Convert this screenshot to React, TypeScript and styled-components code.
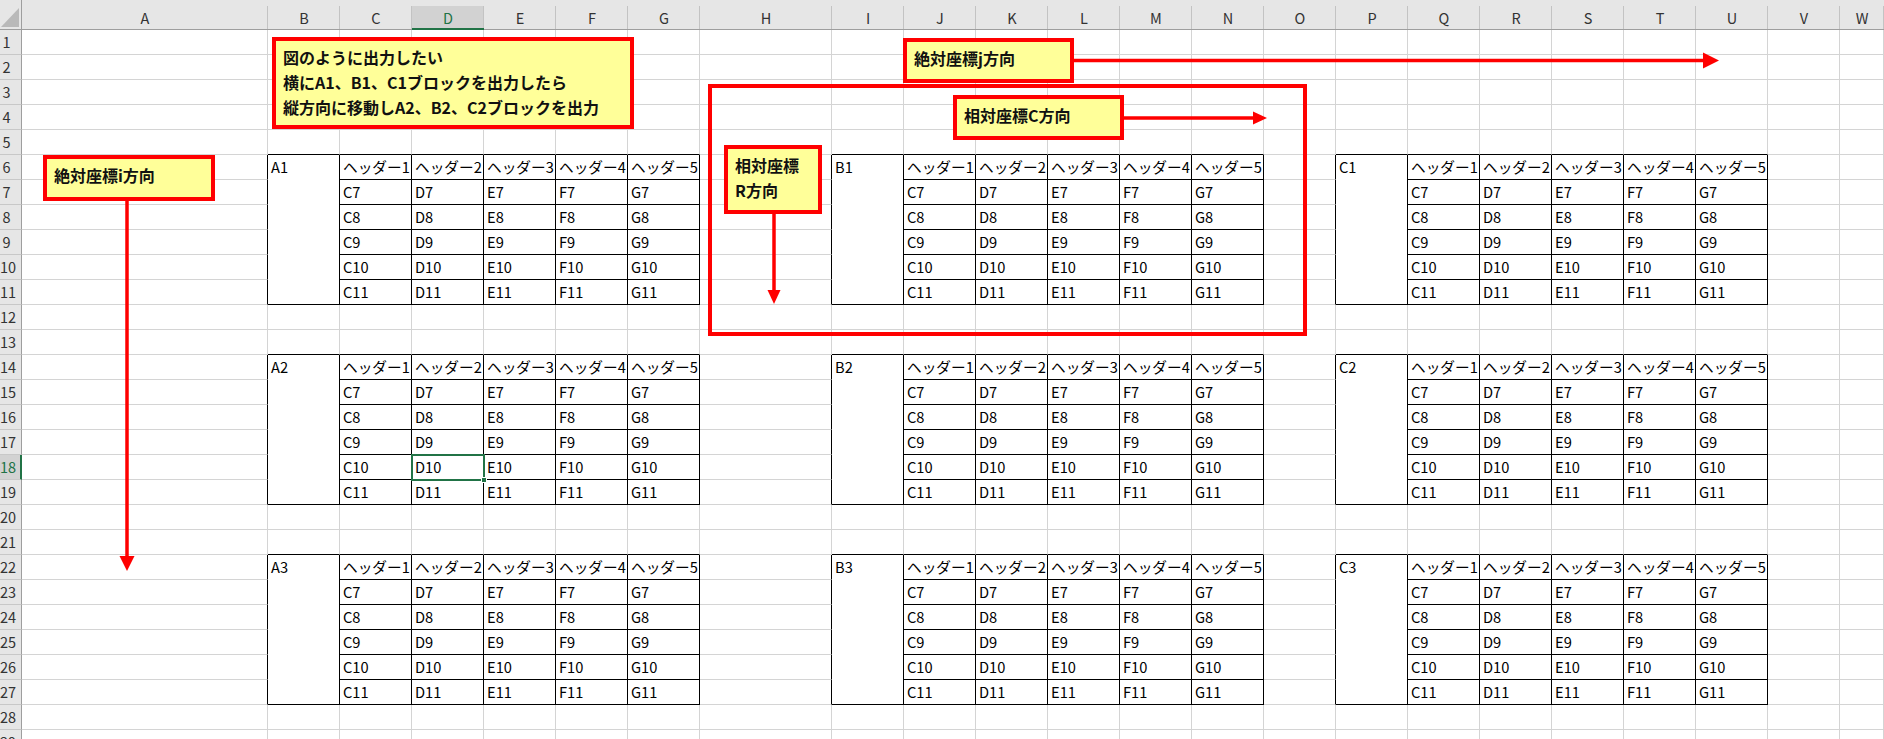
import React from "react";
import styled, { createGlobalStyle } from "styled-components";

const GREEN = "#217346";
const GRID = "#d4d4d4";
const INK = "#000000";
const RED = "#ff0000";

const COLS = "ABCDEFGHIJKLMNOPQRSTUVW".split("");
const WIDTHS = [246, 72, 72, 72, 72, 72, 72, 132, ...Array(14).fill(72), 44];
const TEMPLATE = `22px ${WIDTHS.map((w) => `${w}px`).join(" ")}`;
const ROW_COUNT = 29;
const ACTIVE_COL = 4; // D
const ACTIVE_ROW = 18;

type Block = { c0: number; r0: number; label: string };

const BLOCK_COLS = [
  { c0: 2, name: "A" },
  { c0: 9, name: "B" },
  { c0: 16, name: "C" },
];
const BLOCK_ROWS = [
  { r0: 6, n: 1 },
  { r0: 14, n: 2 },
  { r0: 22, n: 3 },
];
const BLOCKS: Block[] = BLOCK_ROWS.flatMap(({ r0, n }) =>
  BLOCK_COLS.map(({ c0, name }) => ({ c0, r0, label: `${name}${n}` }))
);

const blockAt = (c: number, r: number) =>
  BLOCKS.find((b) => c >= b.c0 && c <= b.c0 + 5 && r >= b.r0 && r <= b.r0 + 5);

const rightRuled = (c: number, r: number) =>
  BLOCKS.some((b) => r >= b.r0 && r <= b.r0 + 5 && c >= b.c0 - 1 && c <= b.c0 + 5);

const bottomRuled = (c: number, r: number) =>
  BLOCKS.some(
    (b) =>
      c >= b.c0 &&
      c <= b.c0 + 5 &&
      r >= b.r0 - 1 &&
      r <= b.r0 + 5 &&
      (c > b.c0 || r === b.r0 - 1 || r === b.r0 + 5)
  );

const cellText = (c: number, r: number) => {
  const b = blockAt(c, r);
  if (!b) return "";
  const k = c - b.c0;
  if (k === 0) return r === b.r0 ? b.label : "";
  if (r === b.r0) return `ヘッダー${k}`;
  return `${"CDEFG"[k - 1]}${7 + r - b.r0 - 1}`;
};

const GlobalStyle = createGlobalStyle`
  *, *::before, *::after { box-sizing: border-box; }
  html, body { margin: 0; padding: 0; background: #ffffff; }
  body { overflow: hidden; }
`;

const Sheet = styled.div`
  position: relative;
  width: 1884px;
  height: 739px;
  overflow: hidden;
  display: grid;
  grid-template-columns: ${TEMPLATE};
  grid-template-rows: 30px repeat(${ROW_COUNT}, 25px);
  font-family: "Noto Sans CJK JP", "Noto Sans", sans-serif;
  background: #ffffff;
`;

const Corner = styled.div`
  position: relative;
  background: #e6e6e6;
  border-right: 1px solid #9e9e9e;
  border-bottom: 1px solid #9e9e9e;
  &::after {
    content: "";
    position: absolute;
    right: 2px;
    bottom: 2px;
    width: 0;
    height: 0;
    border-style: solid;
    border-width: 0 0 19px 18px;
    border-color: transparent transparent #b9b9b9 transparent;
  }
`;

const ColHead = styled.div<{ $active?: boolean }>`
  position: relative;
  background: linear-gradient(
    to bottom,
    #e6e6e6 6px,
    ${(p) => (p.$active ? "#d2d2d2" : "#e6e6e6")} 6px
  );
  border-bottom: ${(p) => (p.$active ? `2px solid ${GREEN}` : "1px solid #9e9e9e")};
  padding-top: 6px;
  text-align: center;
  font-size: 14.5px;
  line-height: 23px;
  color: ${(p) => (p.$active ? GREEN : "#333333")};
  &::after {
    content: "";
    position: absolute;
    right: 0;
    top: 6px;
    bottom: 0;
    width: 1px;
    background: #c3c3c3;
  }
`;

const RowHead = styled.div<{ $active?: boolean }>`
  background: ${(p) => (p.$active ? "#d2d2d2" : "#e6e6e6")};
  border-right: ${(p) => (p.$active ? `2px solid ${GREEN}` : "1px solid #9e9e9e")};
  border-bottom: 1px solid #c8c8c8;
  padding-right: 8px;
  text-align: center;
  white-space: nowrap;
  font-size: 14.5px;
  line-height: 24px;
  color: ${(p) => (p.$active ? GREEN : "#333333")};
`;

const Cell = styled.div<{ $right: string; $bottom: string }>`
  border-right: 1px solid ${(p) => p.$right};
  border-bottom: 1px solid ${(p) => p.$bottom};
  padding-left: 3px;
  font-size: 14.67px;
  line-height: 24px;
  white-space: nowrap;
  color: #000000;
`;

const LabelCell = styled(Cell)`
  grid-row: span 6;
  background: #ffffff;
`;

const Callout = styled.div<{ $x: number; $y: number; $w: number; $h: number }>`
  position: absolute;
  left: ${(p) => p.$x}px;
  top: ${(p) => p.$y}px;
  width: ${(p) => p.$w}px;
  height: ${(p) => p.$h}px;
  border: 4px solid ${RED};
  background: #ffff99;
  padding: 4px 0 0 7px;
  font-size: 16px;
  font-weight: 700;
  line-height: 25px;
  color: #111111;
  white-space: nowrap;
`;

const CalloutLine = styled.div``;

const Frame = styled.div<{ $x: number; $y: number; $w: number; $h: number }>`
  position: absolute;
  left: ${(p) => p.$x}px;
  top: ${(p) => p.$y}px;
  width: ${(p) => p.$w}px;
  height: ${(p) => p.$h}px;
  border: 4px solid ${RED};
  pointer-events: none;
`;

const Selection = styled.div<{ $x: number; $y: number; $w: number; $h: number }>`
  position: absolute;
  left: ${(p) => p.$x}px;
  top: ${(p) => p.$y}px;
  width: ${(p) => p.$w}px;
  height: ${(p) => p.$h}px;
  border: 2px solid ${GREEN};
  pointer-events: none;
  &::after {
    content: "";
    position: absolute;
    right: -4px;
    bottom: -4px;
    width: 6px;
    height: 6px;
    background: ${GREEN};
    border: 1px solid #ffffff;
  }
`;

const ArrowLayer = styled.svg`
  position: absolute;
  left: 0;
  top: 0;
  width: 1884px;
  height: 739px;
  pointer-events: none;
`;

const colLeft = (c: number) => 22 + WIDTHS.slice(0, c - 1).reduce((a, b) => a + b, 0);
const rowTop = (r: number) => 30 + (r - 1) * 25;

export default function App() {
  const cells: React.ReactNode[] = [];
  cells.push(<Corner key="corner" />);
  COLS.forEach((letter, i) => {
    cells.push(
      <ColHead key={`h-${letter}`} $active={i + 1 === ACTIVE_COL}>
        {letter}
      </ColHead>
    );
  });

  for (let r = 1; r <= ROW_COUNT; r++) {
    cells.push(
      <RowHead key={`r-${r}`} $active={r === ACTIVE_ROW}>
        {r}
      </RowHead>
    );
    for (let c = 1; c <= COLS.length; c++) {
      const b = blockAt(c, r);
      if (b && c === b.c0) {
        if (r === b.r0) {
          cells.push(
            <LabelCell key={`${c}-${r}`} $right={INK} $bottom={INK}>
              {b.label}
            </LabelCell>
          );
        }
        continue;
      }
      cells.push(
        <Cell
          key={`${c}-${r}`}
          $right={rightRuled(c, r) ? INK : GRID}
          $bottom={bottomRuled(c, r) ? INK : GRID}
        >
          {cellText(c, r)}
        </Cell>
      );
    }
  }

  const selX = colLeft(ACTIVE_COL) - 1;
  const selY = rowTop(ACTIVE_ROW) - 1;

  return (
    <>
      <GlobalStyle />
      <Sheet>
        {cells}

        <Selection $x={selX} $y={selY} $w={74} $h={27} />

        <Frame $x={708} $y={84} $w={599} $h={252} />

        <Callout $x={272} $y={37} $w={362} $h={92}>
          <CalloutLine>図のように出力したい</CalloutLine>
          <CalloutLine>横にA1、B1、C1ブロックを出力したら</CalloutLine>
          <CalloutLine>縦方向に移動しA2、B2、C2ブロックを出力</CalloutLine>
        </Callout>

        <Callout $x={903} $y={38} $w={171} $h={45}>
          <CalloutLine>絶対座標j方向</CalloutLine>
        </Callout>

        <Callout $x={953} $y={95} $w={171} $h={45}>
          <CalloutLine>相対座標C方向</CalloutLine>
        </Callout>

        <Callout $x={724} $y={145} $w={98} $h={69}>
          <CalloutLine>相対座標</CalloutLine>
          <CalloutLine>R方向</CalloutLine>
        </Callout>

        <Callout $x={43} $y={155} $w={172} $h={46}>
          <CalloutLine>絶対座標i方向</CalloutLine>
        </Callout>

        <ArrowLayer viewBox="0 0 1884 739">
          <g stroke={RED} strokeWidth={3.5} fill="none">
            <line x1={1074} y1={60.5} x2={1705} y2={60.5} />
            <line x1={1124} y1={118} x2={1254} y2={118} />
            <line x1={774} y1={214} x2={774} y2={291} />
            <line x1={127} y1={201} x2={127} y2={557} />
          </g>
          <g fill={RED}>
            <polygon points="1703,52.5 1719,60.5 1703,68.5" />
            <polygon points="1253,111.5 1267,118 1253,124.5" />
            <polygon points="767.5,290 774,304 780.5,290" />
            <polygon points="119.5,556 127,571 134.5,556" />
          </g>
        </ArrowLayer>
      </Sheet>
    </>
  );
}
